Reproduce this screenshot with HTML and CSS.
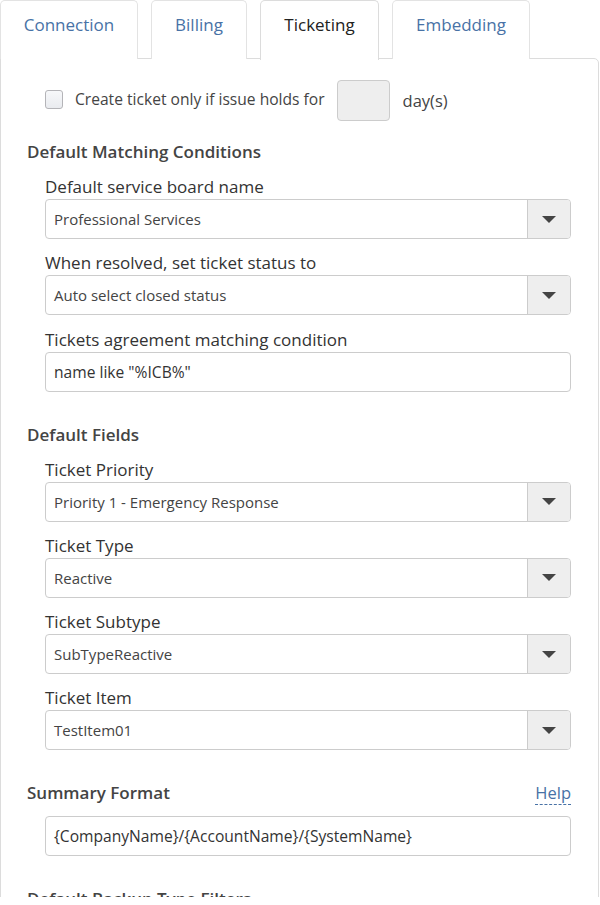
FILE: index.html
```html
<!DOCTYPE html>
<html>
<head>
<meta charset="utf-8">
<link rel="stylesheet" href="styles.css">
</head>
<body>
<div class="viewport">
  <ul class="tabs">
    <li class="tab">Connection</li>
    <li class="tab">Billing</li>
    <li class="tab active">Ticketing</li>
    <li class="tab">Embedding</li>
  </ul>
  <div class="panel">
    <div class="hold-row">
      <span class="checkbox"></span>
      <span class="hold-label">Create ticket only if issue holds for</span>
      <span class="days-input"></span>
      <span class="days-label">day(s)</span>
    </div>

    <h3 class="section-title first">Default Matching Conditions</h3>
    <div class="group">
      <div class="field">
        <label class="field-label">Default service board name</label>
        <div class="select"><span class="select-value">Professional Services</span><span class="select-btn"><span class="caret"></span></span></div>
      </div>
      <div class="field">
        <label class="field-label">When resolved, set ticket status to</label>
        <div class="select"><span class="select-value">Auto select closed status</span><span class="select-btn"><span class="caret"></span></span></div>
      </div>
      <div class="field">
        <label class="field-label">Tickets agreement matching condition</label>
        <div class="text-input">name like "%ICB%"</div>
      </div>
    </div>

    <h3 class="section-title">Default Fields</h3>
    <div class="group">
      <div class="field">
        <label class="field-label">Ticket Priority</label>
        <div class="select"><span class="select-value">Priority 1 - Emergency Response</span><span class="select-btn"><span class="caret"></span></span></div>
      </div>
      <div class="field">
        <label class="field-label">Ticket Type</label>
        <div class="select"><span class="select-value">Reactive</span><span class="select-btn"><span class="caret"></span></span></div>
      </div>
      <div class="field">
        <label class="field-label">Ticket Subtype</label>
        <div class="select"><span class="select-value">SubTypeReactive</span><span class="select-btn"><span class="caret"></span></span></div>
      </div>
      <div class="field">
        <label class="field-label">Ticket Item</label>
        <div class="select"><span class="select-value">TestItem01</span><span class="select-btn"><span class="caret"></span></span></div>
      </div>
    </div>

    <div class="section-head">
      <h3 class="section-title inline">Summary Format</h3>
      <span class="help">Help</span>
    </div>
    <div class="group">
      <div class="field">
        <div class="text-input">{CompanyName}/{AccountName}/{SystemName}</div>
      </div>
    </div>

    <h3 class="section-title">Default Backup Type Filters</h3>
  </div>
</div>
</body>
</html>
```

FILE: styles.css
```css
* { box-sizing: border-box; }
html, body { margin: 0; padding: 0; background: #fff; }
body {
  font-family: "Open Sans", "Liberation Sans", sans-serif;
  color: #333;
  font-size: 16px;
}
.viewport {
  width: 600px;
  height: 897px;
  overflow: hidden;
}
.tabs {
  list-style: none;
  margin: 0;
  padding: 0;
  display: flex;
  gap: 13px;
  height: 59px;
  position: relative;
  z-index: 1;
}
.tab {
  height: 59px;
  padding: 11px 0 0;
  border: 1px solid #e3e3e3;
  border-bottom: none;
  border-radius: 5px 5px 0 0;
  color: #4872a6;
  font-size: 17px;
  line-height: 26px;
  background: #fff;
  text-align: center;
}
.tab:nth-child(1) { width: 138px; }
.tab:nth-child(2) { width: 96px; }
.tab:nth-child(3) { width: 119px; }
.tab:nth-child(4) { width: 138px; }
.tab.active {
  color: #222;
  border-color: #dcdcdc;
  height: 60px;
}
.panel {
  margin-top: -1px;
  border: 1px solid #dcdcdc;
  border-radius: 0 5px 0 0;
  width: 599px;
  padding: 21px 27px 0 26px;
  min-height: 900px;
}
.hold-row {
  display: flex;
  align-items: center;
  padding-left: 18px;
  height: 41px;
}
.checkbox {
  width: 18px;
  height: 19px;
  border: 1px solid #b4b4b8;
  border-radius: 3px;
  background: linear-gradient(#f7f8fa, #e9ebef);
  margin-right: 12px;
  margin-top: -3px;
}
.hold-label { color: #444; font-size: 15.6px; margin-top: -3px; }
.days-input {
  width: 53px;
  height: 41px;
  background: #eee;
  border: 1px solid #ccc;
  border-radius: 4px;
  margin-left: 12px;
  margin-right: 13px;
}
.days-label { color: #444; font-size: 16.5px; margin-top: 0; }

.section-title {
  margin: 31px 0 0;
  font-size: 17px;
  font-weight: 600;
  color: #444;
  line-height: 24px;
}
.section-title.first { margin-top: 19px; }
.group { padding-left: 18px; }
.field { margin-top: 11px; }
.field + .field { margin-top: 12.3px; }
.field-label {
  display: block;
  font-size: 17px;
  line-height: 24px;
  color: #333;
  margin-bottom: 0;
}
.select, .text-input {
  display: flex;
  align-items: center;
  height: 40px;
  border: 1px solid #ccc;
  border-radius: 4px;
  background: #fff;
  font-size: 15px;
  color: #444;
}
.select-value {
  flex: 1;
  padding-left: 8px;
}
.text-input { padding-left: 8px; color: #333; font-size: 15.6px; }
.select-btn {
  width: 43px;
  align-self: stretch;
  background: #eee;
  border-left: 1px solid #ccc;
  border-radius: 0 3px 3px 0;
  display: flex;
  align-items: center;
  justify-content: center;
}
.caret {
  width: 0;
  height: 0;
  border-left: 7px solid transparent;
  border-right: 7px solid transparent;
  border-top: 7px solid #444;
}
.section-head {
  display: flex;
  justify-content: space-between;
  align-items: center;
  margin-top: 31px;
}
.section-title.inline { margin: 0; }
.help {
  color: #4872a6;
  font-size: 16.5px;
  line-height: 22px;
  border-bottom: 1px dashed #4872a6;
}
```
